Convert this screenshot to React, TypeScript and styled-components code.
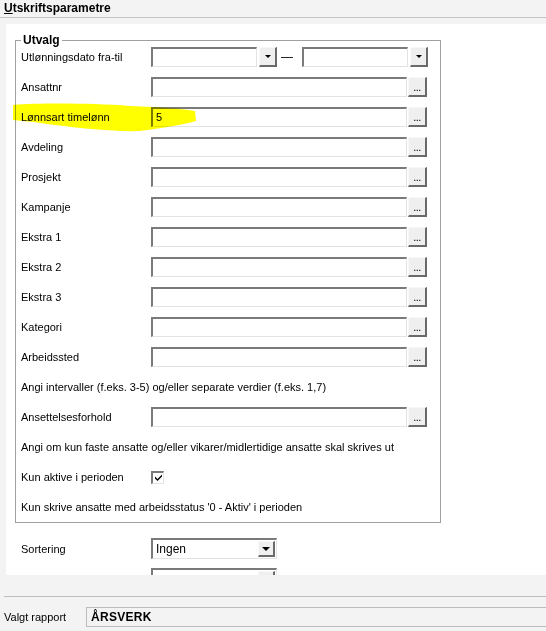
import * as React from "react";
import styled, { createGlobalStyle } from "styled-components";

const GlobalStyle = createGlobalStyle`
  html, body {
    margin: 0;
    padding: 0;
    background: #f3f3f3;
    font-family: "Liberation Sans", Arial, sans-serif;
    font-size: 11px;
    color: #000;
  }
`;

const lookupFields = [
  "Ansattnr",
  "Lønnsart timelønn",
  "Avdeling",
  "Prosjekt",
  "Kampanje",
  "Ekstra 1",
  "Ekstra 2",
  "Ekstra 3",
  "Kategori",
  "Arbeidssted",
];

const values: Record<string, string> = { "Lønnsart timelønn": "5" };

const DateCombo = () => (
  <Combo>
    <ComboInput />
    <RaisedButton $w={18}>
      <Arrow $size={3} />
    </RaisedButton>
  </Combo>
);

const Lookup = ({ value }: { value?: string }) => (
  <LookupWrap>
    <TextBox>{value}</TextBox>
    <RaisedButton $w={19}>
      <Dots>...</Dots>
    </RaisedButton>
  </LookupWrap>
);

const Dropdown = ({ value }: { value?: string }) => (
  <SelectBox>
    <SelectText>{value}</SelectText>
    <SelectButton>
      <Arrow $size={4} />
    </SelectButton>
  </SelectBox>
);

const App: React.FC = () => {
  return (
    <Page>
      <GlobalStyle />
      <TitleBar>
        <u>U</u>tskriftsparametre
      </TitleBar>

      <Panel>
        <Group>
          <Legend>Utvalg</Legend>
          <Row>
            <Label>Utlønningsdato fra-til</Label>
            <DateRange>
              <DateCombo />
              <Dash>—</Dash>
              <DateCombo />
            </DateRange>
          </Row>
          {lookupFields.map((f) => (
            <Row key={f}>
              <Label>{f}</Label>
              <Lookup value={values[f]} />
            </Row>
          ))}
          <Note>Angi intervaller (f.eks. 3-5) og/eller separate verdier (f.eks. 1,7)</Note>
          <Row>
            <Label>Ansettelsesforhold</Label>
            <Lookup />
          </Row>
          <Note>Angi om kun faste ansatte og/eller vikarer/midlertidige ansatte skal skrives ut</Note>
          <Row>
            <Label>Kun aktive i perioden</Label>
            <CheckBox>
              <svg width="9" height="9" viewBox="0 0 9 9">
                <path d="M1 3.5 L3.5 6 L8 1.5 L8 3.5 L3.5 8 L1 5.5 Z" fill="#000" />
              </svg>
            </CheckBox>
          </Row>
          <Note>Kun skrive ansatte med arbeidsstatus '0 - Aktiv' i perioden</Note>
        </Group>

        <Options>
          <Row>
            <Label>Sortering</Label>
            <Dropdown value="Ingen" />
          </Row>
          <Row>
            <Label>Vis kun totalsummer</Label>
            <Dropdown />
          </Row>
        </Options>
      </Panel>

      <Divider />
      <ReportRow>
        <ReportLabel>Valgt rapport</ReportLabel>
        <ReportBox>ÅRSVERK</ReportBox>
      </ReportRow>

      <Highlight width="546" height="631" viewBox="0 0 546 631">
        <path
          d="M13 105 C 40 103, 90 103, 130 106 C 160 107, 185 109, 195 111 L 196 121 C 185 124, 165 128, 140 131 C 110 132, 70 127, 40 123 C 28 121, 18 121, 13 120 Z"
          fill="#ffff00"
        />
      </Highlight>
    </Page>
  );
};

export default App;

/* Styles */
const Page = styled.div`
  position: relative;
  width: 546px;
  height: 631px;
  overflow: hidden;
`;

const TitleBar = styled.div`
  height: 17px;
  line-height: 17px;
  padding-left: 4px;
  font-size: 12px;
  font-weight: bold;
  border-bottom: 1px solid #c3c3c3;
  u {
    text-decoration-thickness: 1px;
    text-underline-offset: 1px;
  }
`;

const Panel = styled.div`
  margin: 6px 0 0 6px;
  height: 551px;
  background: #fff;
  overflow: hidden;
  padding: 9px 0 0 9px;
  box-sizing: border-box;
`;

const Group = styled.fieldset`
  box-sizing: border-box;
  width: 426px;
  min-width: 0;
  margin: 0;
  padding: 0 5px 5px 5px;
  border: 1px solid #a0a0a0;
  display: flex;
  flex-direction: column;
  gap: 10px;
`;

const Legend = styled.legend`
  padding: 0 2px;
  margin: 0;
  font-size: 12px;
  font-weight: bold;
  line-height: 14px;
`;

const Row = styled.div`
  display: grid;
  grid-template-columns: 130px auto;
  align-items: center;
  height: 20px;
`;

const Label = styled.span`
  white-space: nowrap;
`;

const Note = styled.div`
  height: 20px;
  line-height: 20px;
  white-space: nowrap;
`;

const DateRange = styled.div`
  display: flex;
  align-items: center;
`;

const Combo = styled.div`
  display: flex;
  gap: 2px;
  height: 20px;
`;

const sunken = `
  box-sizing: border-box;
  background: #fff;
  border-style: solid;
  border-width: 2px 1px 1px 2px;
  border-color: #7a7a7a #e3e3e3 #e3e3e3 #7a7a7a;
`;

const ComboInput = styled.div`
  ${sunken}
  width: 106px;
  height: 20px;
`;

const Dash = styled.span`
  width: 25px;
  padding-left: 4px;
  box-sizing: border-box;
  font-size: 12px;
`;

const LookupWrap = styled.div`
  display: flex;
  gap: 1px;
  height: 20px;
`;

const TextBox = styled.div`
  ${sunken}
  width: 256px;
  height: 20px;
  padding-left: 3px;
  line-height: 17px;
  font-size: 11px;
`;

const RaisedButton = styled.div<{ $w: number }>`
  box-sizing: border-box;
  width: ${(p) => p.$w}px;
  height: 20px;
  background: #efefef;
  border-style: solid;
  border-width: 1px 2px 2px 1px;
  border-color: #f8f8f8 #6a6a6a #6a6a6a #f8f8f8;
  display: flex;
  align-items: center;
  justify-content: center;
`;

const Dots = styled.span`
  font-size: 11px;
  line-height: 11px;
  margin-top: 2px;
  letter-spacing: -0.5px;
`;

const Arrow = styled.span<{ $size: number }>`
  width: 0;
  height: 0;
  border-left: ${(p) => p.$size}px solid transparent;
  border-right: ${(p) => p.$size}px solid transparent;
  border-top: ${(p) => p.$size}px solid #000;
`;

const CheckBox = styled.div`
  box-sizing: border-box;
  width: 13px;
  height: 13px;
  background: #fff;
  border-style: solid;
  border-width: 2px 1px 1px 2px;
  border-color: #7a7a7a #e3e3e3 #e3e3e3 #7a7a7a;
  display: flex;
  align-items: center;
  justify-content: center;
`;

const Options = styled.div`
  margin-top: 15px;
  padding-left: 6px;
  display: flex;
  flex-direction: column;
  gap: 10px;
`;

const SelectBox = styled.div`
  ${sunken}
  width: 126px;
  height: 21px;
  display: flex;
  align-items: stretch;
  padding: 1px 1px 1px 1px;
`;

const SelectText = styled.span`
  flex: 1;
  padding-left: 2px;
  line-height: 16px;
  font-size: 12px;
`;

const SelectButton = styled.div`
  box-sizing: border-box;
  width: 17px;
  background: #efefef;
  border-style: solid;
  border-width: 1px 2px 2px 1px;
  border-color: #f8f8f8 #6a6a6a #6a6a6a #f8f8f8;
  display: flex;
  align-items: center;
  justify-content: center;
`;

const Divider = styled.div`
  margin: 21px 0 0 4px;
  border-top: 1px solid #bdbdbd;
`;

const ReportRow = styled.div`
  display: flex;
  align-items: center;
  margin-top: 10px;
  padding-left: 4px;
`;

const ReportLabel = styled.span`
  width: 82px;
  font-size: 11px;
`;

const ReportBox = styled.div`
  flex: 1;
  box-sizing: border-box;
  height: 20px;
  line-height: 18px;
  padding-left: 4px;
  border: 1px solid #bdbdbd;
  border-right: none;
  background: #f3f3f3;
  font-size: 12px;
  font-weight: bold;
  letter-spacing: 0.3px;
`;

const Highlight = styled.svg`
  position: absolute;
  left: 0;
  top: 0;
  pointer-events: none;
  mix-blend-mode: multiply;
`;
